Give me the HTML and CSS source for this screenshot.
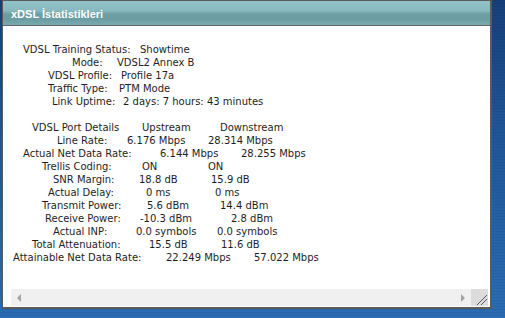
FILE: index.html
```html
<!DOCTYPE html>
<html lang="tr">
<head>
<meta charset="utf-8">
<title>xDSL İstatistikleri</title>
<link rel="stylesheet" href="styles.css">
</head>
<body>
<div class="window">
  <div class="titlebar"><span class="title">xDSL İstatistikleri</span></div>
  <div class="content">
    <div class="textbox">
      <div class="text">
        <div class="row r1"><span>VDSL Training Status:</span><span>Showtime</span></div>
        <div class="row r2"><span>Mode:</span><span>VDSL2 Annex B</span></div>
        <div class="row r3"><span>VDSL Profile:</span><span>Profile 17a</span></div>
        <div class="row r4"><span>Traffic Type:</span><span>PTM Mode</span></div>
        <div class="row r5"><span>Link Uptime:</span><span>2 days: 7 hours: 43 minutes</span></div>
        <div class="row blank"></div>
        <div class="row r6"><span>VDSL Port Details</span><span>Upstream</span><span>Downstream</span></div>
        <div class="row r7"><span>Line Rate:</span><span>6.176 Mbps</span><span>28.314 Mbps</span></div>
        <div class="row r8"><span>Actual Net Data Rate:</span><span>6.144 Mbps</span><span>28.255 Mbps</span></div>
        <div class="row r9"><span>Trellis Coding:</span><span>ON</span><span>ON</span></div>
        <div class="row r10"><span>SNR Margin:</span><span>18.8 dB</span><span>15.9 dB</span></div>
        <div class="row r11"><span>Actual Delay:</span><span>0 ms</span><span>0 ms</span></div>
        <div class="row r12"><span>Transmit Power:</span><span>5.6 dBm</span><span>14.4 dBm</span></div>
        <div class="row r13"><span>Receive Power:</span><span>-10.3 dBm</span><span>2.8 dBm</span></div>
        <div class="row r14"><span>Actual INP:</span><span>0.0 symbols</span><span>0.0 symbols</span></div>
        <div class="row r15"><span>Total Attenuation:</span><span>15.5 dB</span><span>11.6 dB</span></div>
        <div class="row r16"><span>Attainable Net Data Rate:</span><span>22.249 Mbps</span><span>57.022 Mbps</span></div>
      </div>
      <div class="hscroll">
        <div class="track">
          <span class="arrow left"></span>
          <span class="arrow right"></span>
        </div>
        <div class="grip">
          <svg width="17" height="17" viewBox="0 0 17 17">
            <line x1="6" y1="16" x2="16" y2="6" stroke="#5a5a5a" stroke-width="1"/>
            <line x1="10" y1="16" x2="16" y2="10" stroke="#5a5a5a" stroke-width="1"/>
          </svg>
        </div>
      </div>
    </div>
  </div>
</div>
</body>
</html>
```
FILE: styles.css
```css
html, body {
  margin: 0;
  padding: 0;
}
body {
  width: 505px;
  height: 318px;
  overflow: hidden;
  padding-left: 2px;
  box-sizing: border-box;
  background:
    repeating-linear-gradient(to bottom, rgba(0,0,0,0.06) 0px, rgba(0,0,0,0.06) 1px, rgba(255,255,255,0) 1px, rgba(255,255,255,0) 3px),
    linear-gradient(to bottom, #16407a 0%, #1f5597 40%, #2a6cb3 100%);
}
.window {
  width: 490px;
  height: 309px;
  box-sizing: border-box;
  border-style: solid;
  border-color: #5b5b5b;
  border-width: 1px 2px 2px 1px;
  background: #fff;
  display: flex;
  flex-direction: column;
}
.titlebar {
  height: 25px;
  box-sizing: border-box;
  border-bottom: 1px solid #666;
  background: linear-gradient(to bottom, #92c3c8 0%, #87b9be 40%, #6d9ea3 55%, #6a9ca1 75%, #78abb0 100%);
  padding-left: 8px;
  display: flex;
  align-items: center;
}
.title {
  font-family: "Liberation Sans", Arial, sans-serif;
  font-weight: bold;
  font-size: 11px;
  color: #fff;
  position: relative;
  top: 1px;
}
.content {
  flex: 1;
  padding: 0 2px 1px 8px;
  display: flex;
  flex-direction: column;
}
.textbox {
  flex: 1;
  display: flex;
  flex-direction: column;
}
.text {
  flex: 1;
  padding-top: 17px;
  font-family: "DejaVu Sans", sans-serif;
  font-size: 10px;
  line-height: 13px;
  color: #1e1e1e;
}
.row {
  display: grid;
  height: 13px;
  white-space: nowrap;
}
.r1  { padding-left: 12px; grid-template-columns: 117px auto; }
.r2  { padding-left: 61px; grid-template-columns: 45px auto; }
.r3  { padding-left: 37px; grid-template-columns: 73px auto; }
.r4  { padding-left: 37px; grid-template-columns: 71px auto; }
.r5  { padding-left: 41px; grid-template-columns: 71px auto; }
.r6  { padding-left: 21px; grid-template-columns: 110px 78px auto; }
.r7  { padding-left: 46px; grid-template-columns: 70px 81px auto; }
.r8  { padding-left: 12px; grid-template-columns: 137px 81px auto; }
.r9  { padding-left: 31px; grid-template-columns: 100px 66px auto; }
.r10 { padding-left: 42px; grid-template-columns: 86px 72px auto; }
.r11 { padding-left: 37px; grid-template-columns: 98px 69px auto; }
.r12 { padding-left: 31px; grid-template-columns: 105px 73px auto; }
.r13 { padding-left: 34px; grid-template-columns: 95px 91px auto; }
.r14 { padding-left: 42px; grid-template-columns: 83px 81px auto; }
.r15 { padding-left: 21px; grid-template-columns: 117px 72px auto; }
.r16 { padding-left: 2px;  grid-template-columns: 153px 88px auto; }

.hscroll {
  height: 17px;
  display: flex;
}
.track {
  flex: 1;
  background: #f0f0f0;
  display: flex;
  align-items: center;
  justify-content: space-between;
  padding: 0 6px;
}
.arrow {
  width: 0;
  height: 0;
  border-top: 4px solid transparent;
  border-bottom: 4px solid transparent;
}
.arrow.left { border-right: 4px solid #a3a3a3; }
.arrow.right { border-left: 4px solid #a3a3a3; }
.grip {
  width: 17px;
  height: 17px;
  background: #dcdcdc;
}
.grip svg { display: block; }
```
